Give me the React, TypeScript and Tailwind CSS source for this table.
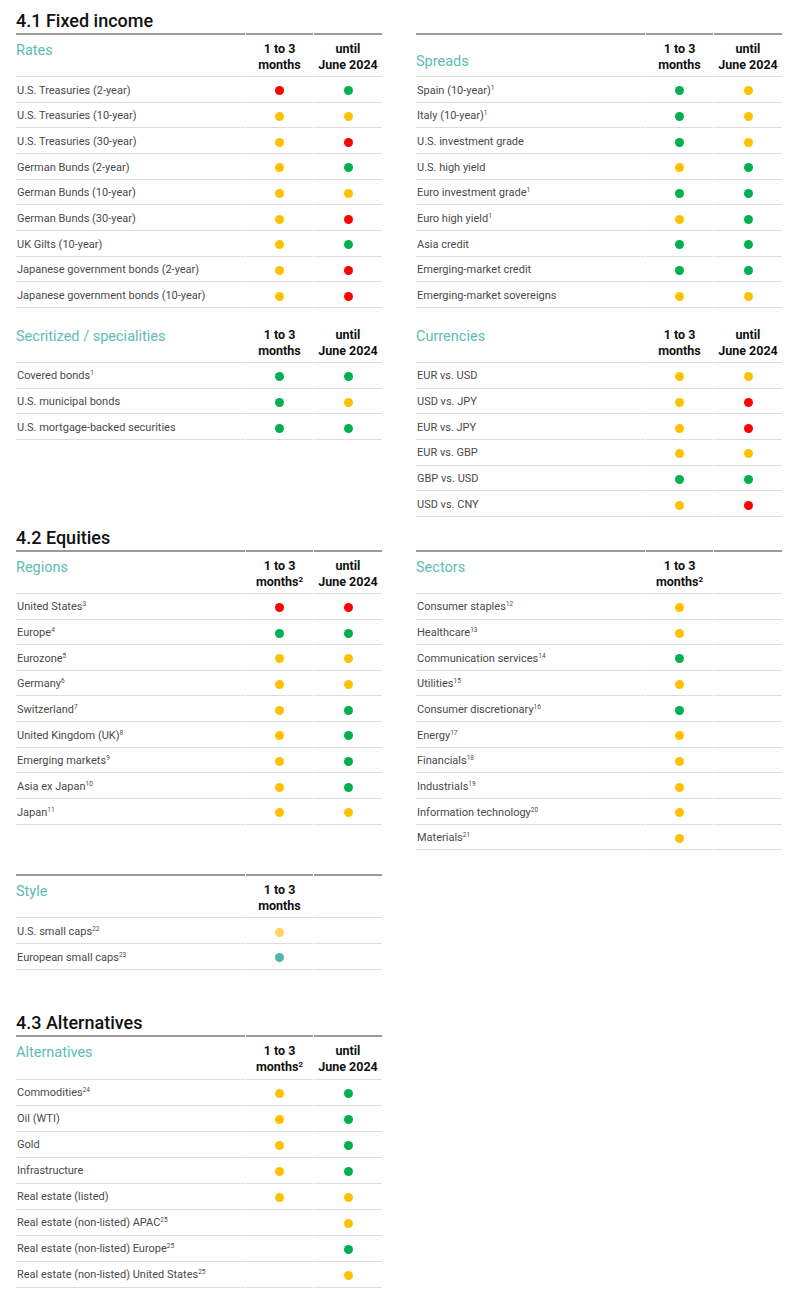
type Dot = "r" | "g" | "y" | "ly" | "t" | "";

type Row = { label: string; sup?: string; a: Dot; b?: Dot };

const dotColor: Record<string, string> = {
  r: "bg-[#ff0000]",
  g: "bg-[#00b050]",
  y: "bg-[#ffc000]",
  ly: "bg-[#ffd45c]",
  t: "bg-[#4fb7aa]",
};

function Marker({ c }: { c?: Dot }) {
  if (!c) return null;
  return <span className={`block h-[9px] w-[9px] rounded-full ${dotColor[c]}`} />;
}

function Table({
  name,
  rows,
  single,
  sup,
  nameBottom,
  thick,
  tall,
  className = "",
}: {
  name: string;
  rows: Row[];
  single?: boolean;
  sup?: boolean;
  nameBottom?: boolean;
  thick?: boolean;
  tall?: boolean;
  className?: string;
}) {
  const cell = "border-b border-[#dcdcdc]";
  const rowH = tall ? "h-[26px]" : "h-[25.67px]";
  return (
    <div className={className}>
      {thick && (
        <div className="grid grid-cols-[229px_67px_68px] gap-x-px">
          <div className="h-[2px] bg-[#9a9a9a]" />
          <div className="h-[2px] bg-[#9a9a9a]" />
          <div className="h-[2px] bg-[#9a9a9a]" />
        </div>
      )}
      <div className="grid grid-cols-[229px_67px_68px] gap-x-px">
        <div
          className={`${cell} flex pt-[7px] text-[14.5px] leading-[18px] text-[#5cbdb1] ${
            tall ? "h-[43px]" : "h-[42px]"
          } ${nameBottom ? "items-end pb-[5px]" : "items-start"}`}
        >
          {name}
        </div>
        <div className={`${cell} pt-[6px] text-center text-[12.5px] font-bold leading-[16px] text-[#111]`}>
          1 to 3
          <br />
          months{sup && <sup className="-top-[4px] text-[8px]">2</sup>}
        </div>
        <div className={`${cell} pt-[6px] text-center text-[12.5px] font-bold leading-[16px] text-[#111]`}>
          {!single && (
            <>
              until
              <br />
              June 2024
            </>
          )}
        </div>
        {rows.map((r) => (
          <div key={r.label} className="contents">
            <div className={`${cell} ${rowH} flex items-center pl-[1px] pt-[3px] text-[11px] text-[#4a4a4a]`}>
              <span>
                {r.label}
                {r.sup && <sup className="-top-[4px] text-[6.5px]">{r.sup}</sup>}
              </span>
            </div>
            <div className={`${cell} ${rowH} flex items-center justify-center pt-[3px]`}>
              <Marker c={r.a} />
            </div>
            <div className={`${cell} ${rowH} flex items-center justify-center pt-[3px]`}>
              <Marker c={r.b} />
            </div>
          </div>
        ))}
      </div>
    </div>
  );
}

function Title({ children }: { children: string }) {
  return (
    <div className="flex h-[33px] items-end pb-[1px] text-[18px] font-medium leading-[22px] text-[#111]">
      {children}
    </div>
  );
}

const rates: Row[] = [
  { label: "U.S. Treasuries (2-year)", a: "r", b: "g" },
  { label: "U.S. Treasuries (10-year)", a: "y", b: "y" },
  { label: "U.S. Treasuries (30-year)", a: "y", b: "r" },
  { label: "German Bunds (2-year)", a: "y", b: "g" },
  { label: "German Bunds (10-year)", a: "y", b: "y" },
  { label: "German Bunds (30-year)", a: "y", b: "r" },
  { label: "UK Gilts (10-year)", a: "y", b: "g" },
  { label: "Japanese government bonds (2-year)", a: "y", b: "r" },
  { label: "Japanese government bonds (10-year)", a: "y", b: "r" },
];

const spreads: Row[] = [
  { label: "Spain (10-year)", sup: "1", a: "g", b: "y" },
  { label: "Italy (10-year)", sup: "1", a: "g", b: "y" },
  { label: "U.S. investment grade", a: "g", b: "y" },
  { label: "U.S. high yield", a: "y", b: "g" },
  { label: "Euro investment grade", sup: "1", a: "g", b: "g" },
  { label: "Euro high yield", sup: "1", a: "y", b: "g" },
  { label: "Asia credit", a: "g", b: "g" },
  { label: "Emerging-market credit", a: "g", b: "g" },
  { label: "Emerging-market sovereigns", a: "y", b: "y" },
];

const secritized: Row[] = [
  { label: "Covered bonds", sup: "1", a: "g", b: "g" },
  { label: "U.S. municipal bonds", a: "g", b: "y" },
  { label: "U.S. mortgage-backed securities", a: "g", b: "g" },
];

const currencies: Row[] = [
  { label: "EUR vs. USD", a: "y", b: "y" },
  { label: "USD vs. JPY", a: "y", b: "r" },
  { label: "EUR vs. JPY", a: "y", b: "r" },
  { label: "EUR vs. GBP", a: "y", b: "y" },
  { label: "GBP vs. USD", a: "g", b: "g" },
  { label: "USD vs. CNY", a: "y", b: "r" },
];

const regions: Row[] = [
  { label: "United States", sup: "3", a: "r", b: "r" },
  { label: "Europe", sup: "4", a: "g", b: "g" },
  { label: "Eurozone", sup: "5", a: "y", b: "y" },
  { label: "Germany", sup: "6", a: "y", b: "y" },
  { label: "Switzerland", sup: "7", a: "y", b: "g" },
  { label: "United Kingdom (UK)", sup: "8", a: "y", b: "g" },
  { label: "Emerging markets", sup: "9", a: "y", b: "g" },
  { label: "Asia ex Japan", sup: "10", a: "y", b: "g" },
  { label: "Japan", sup: "11", a: "y", b: "y" },
];

const sectors: Row[] = [
  { label: "Consumer staples", sup: "12", a: "y" },
  { label: "Healthcare", sup: "13", a: "y" },
  { label: "Communication services", sup: "14", a: "g" },
  { label: "Utilities", sup: "15", a: "y" },
  { label: "Consumer discretionary", sup: "16", a: "g" },
  { label: "Energy", sup: "17", a: "y" },
  { label: "Financials", sup: "18", a: "y" },
  { label: "Industrials", sup: "19", a: "y" },
  { label: "Information technology", sup: "20", a: "y" },
  { label: "Materials", sup: "21", a: "y" },
];

const style: Row[] = [
  { label: "U.S. small caps", sup: "22", a: "ly" },
  { label: "European small caps", sup: "23", a: "t" },
];

const alternatives: Row[] = [
  { label: "Commodities", sup: "24", a: "y", b: "g" },
  { label: "Oil (WTI)", a: "y", b: "g" },
  { label: "Gold", a: "y", b: "g" },
  { label: "Infrastructure", a: "y", b: "g" },
  { label: "Real estate (listed)", a: "y", b: "y" },
  { label: "Real estate (non-listed) APAC", sup: "25", a: "", b: "y" },
  { label: "Real estate (non-listed) Europe", sup: "25", a: "", b: "g" },
  { label: "Real estate (non-listed) United States", sup: "25", a: "", b: "y" },
];

export default function App() {
  return (
    <div className="min-h-screen bg-white pl-4 pr-[18px] font-['Roboto',sans-serif]">
      <Title>4.1 Fixed income</Title>
      <div className="grid grid-cols-[366px_366px] gap-x-[34px]">
        <div>
          <Table name="Rates" rows={rates} thick />
          <Table name="Secritized / specialities" rows={secritized} className="mt-[13px]" />
        </div>
        <div>
          <Table name="Spreads" rows={spreads} thick nameBottom />
          <Table name="Currencies" rows={currencies} className="mt-[13px]" />
        </div>
      </div>

      <Title>4.2 Equities</Title>
      <div className="grid grid-cols-[366px_366px] gap-x-[34px]">
        <Table name="Regions" rows={regions} thick sup />
        <Table name="Sectors" rows={sectors} thick sup single />
      </div>

      <div className="mt-[24px] w-[366px]">
        <Table name="Style" rows={style} thick single />
      </div>

      <div className="mt-[32px]">
        <Title>4.3 Alternatives</Title>
      </div>
      <div className="w-[366px]">
        <Table name="Alternatives" rows={alternatives} thick sup tall />
      </div>
    </div>
  );
}
